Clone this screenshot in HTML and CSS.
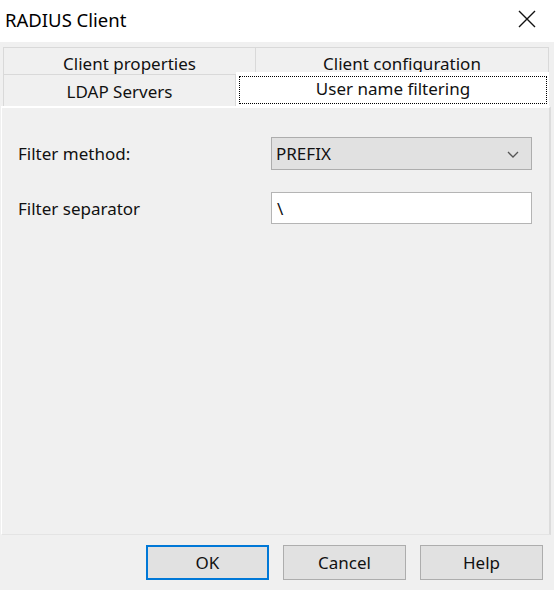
FILE: index.html
```html
<!DOCTYPE html>
<html>
<head>
<meta charset="utf-8">
<link rel="stylesheet" href="styles.css">
</head>
<body>
<div class="window">
  <div class="titlebar">
    <span class="title">RADIUS Client</span>
    <svg class="close" width="20" height="20" viewBox="0 0 20 20"><path d="M2 2 L18 18 M18 2 L2 18" stroke="#111" stroke-width="1.4" fill="none"/></svg>
  </div>
  <div class="body">
    <div class="tabs">
      <div class="tabrow row1">
        <div class="tab t-props">Client properties</div>
        <div class="tab t-conf">Client configuration</div>
      </div>
      <div class="tabrow row2">
        <div class="tab t-ldap">LDAP Servers</div>
        <div class="tab t-sel"><span class="focus">User name filtering</span></div>
      </div>
    </div>
    <div class="panel">
      <div class="form">
        <label class="lbl">Filter method:</label>
        <div class="combo">
          <span class="val">PREFIX</span>
          <svg class="chev" width="12" height="7" viewBox="0 0 12 7"><path d="M1 1 L6 6 L11 1" stroke="#555" stroke-width="1.3" fill="none"/></svg>
        </div>
        <label class="lbl">Filter separator</label>
        <div class="field">\</div>
      </div>
    </div>
    <div class="buttons">
      <div class="btn ok">OK</div>
      <div class="btn">Cancel</div>
      <div class="btn">Help</div>
    </div>
  </div>
</div>
</body>
</html>
```
FILE: styles.css
```css
html, body {
  margin: 0;
  padding: 0;
}
body {
  width: 554px;
  height: 590px;
  overflow: hidden;
  font-family: "Noto Sans", "Open Sans", sans-serif;
  color: #111;
  background: #f0f0f0;
}
.window {
  display: flex;
  flex-direction: column;
  height: 590px;
}
.titlebar {
  height: 42px;
  background: #ffffff;
  display: flex;
  align-items: center;
  justify-content: space-between;
  padding: 0 17px 4px 5px;
  box-sizing: border-box;
}
.title {
  font-size: 18.5px;
  color: #000;
}
.close {
  display: block;
}
.body {
  flex: 1;
  display: flex;
  flex-direction: column;
  padding-top: 5px;
}
.tabs {
  display: flex;
  flex-direction: column;
  margin-left: 3px;
  width: 546px;
}
.tabrow {
  display: flex;
}
.tab {
  display: flex;
  align-items: center;
  justify-content: center;
  font-size: 17px;
  background: #f0f0f0;
  box-sizing: border-box;
  border: 1px solid #d9d9d9;
  color: #111;
}
.row1 .tab {
  height: 27px;
  padding-top: 6px;
  line-height: 20px;
  align-items: flex-start;
  border-bottom: none;
}
.t-props {
  width: 252px;
  border-right: none;
}
.t-conf {
  flex: 1;
}
.row2 {
  height: 32px;
}
.t-ldap {
  width: 233px;
  height: 32px;
  border-bottom: none;
  padding-top: 2px;
}
.t-sel {
  flex: 1;
  height: 34px;
  margin-top: -2px;
  background: #ffffff;
  border: none;
  padding: 4px 2px 2px 3px;
  position: relative;
  z-index: 1;
}
.focus {
  flex: 1;
  align-self: stretch;
  display: flex;
  align-items: center;
  justify-content: center;
  border: 1px dotted #000;
  padding-bottom: 3px;
}
.panel {
  margin-left: 1px;
  width: 550px;
  height: 429px;
  box-sizing: border-box;
  background: #f0f0f0;
  border-top: 2px solid #ffffff;
  border-left: 1px solid #ffffff;
  border-right: 2px solid #dcdcdc;
  border-bottom: 1px solid #e4e4e4;
  padding: 29px 0 0 16px;
}
.form {
  display: grid;
  grid-template-columns: 253px 261px;
  row-gap: 22px;
  align-items: center;
}
.lbl {
  font-size: 17px;
  color: #111;
}
.combo {
  height: 33px;
  box-sizing: border-box;
  border: 1px solid #adadad;
  background: #e1e1e1;
  display: flex;
  align-items: center;
  justify-content: space-between;
  padding: 0 12px 0 4px;
  font-size: 17px;
}
.chev {
  display: block;
  margin-top: 2px;
}
.field {
  height: 32px;
  box-sizing: border-box;
  border: 1px solid #b4b4b4;
  background: #ffffff;
  display: flex;
  align-items: center;
  padding-left: 5px;
  font-size: 17px;
}
.buttons {
  display: flex;
  justify-content: flex-end;
  gap: 14px;
  margin-top: 10px;
  padding-right: 11px;
}
.btn {
  width: 123px;
  height: 35px;
  box-sizing: border-box;
  border: 1px solid #adadad;
  background: #e1e1e1;
  display: flex;
  align-items: center;
  justify-content: center;
  font-size: 17px;
  color: #111;
}
.btn.ok {
  border: 2px solid #0078d7;
}
```
